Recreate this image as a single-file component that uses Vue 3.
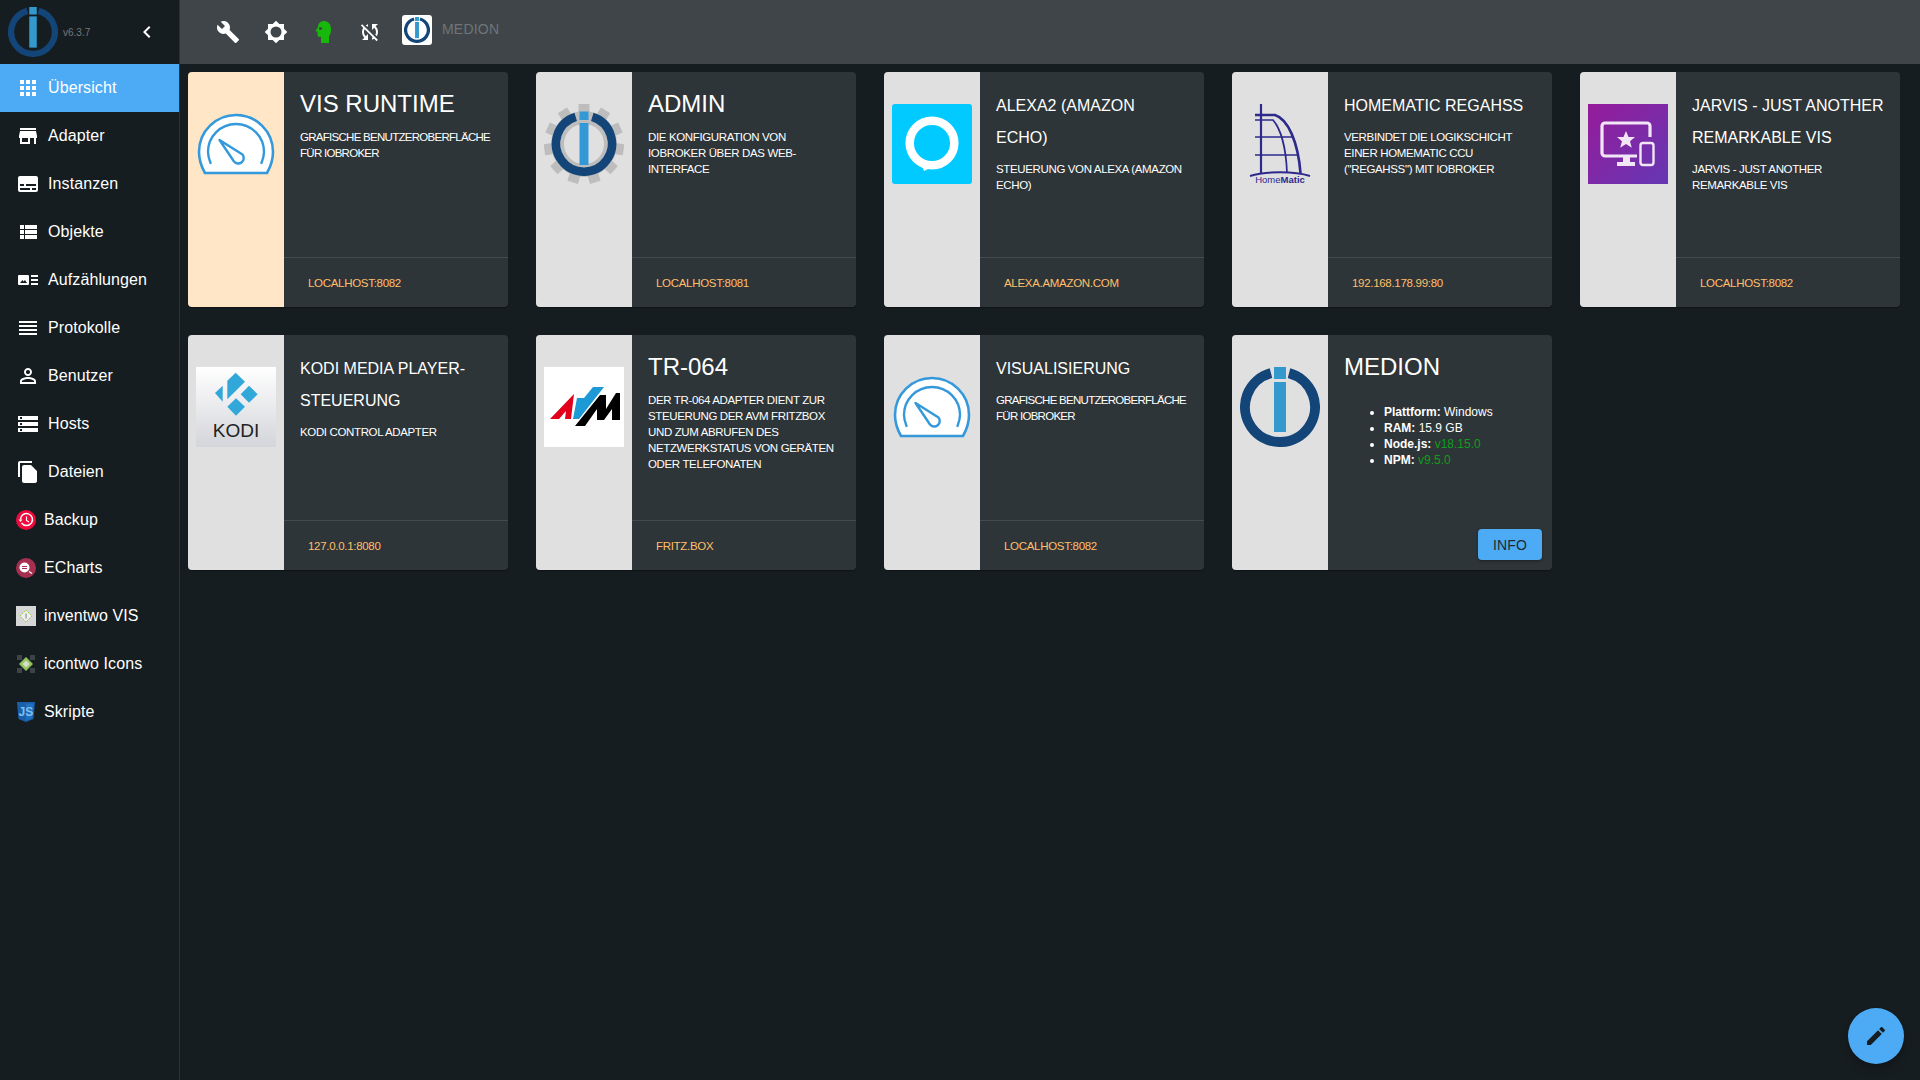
<template>
  <div class="app">
    <!-- shared logos -->
    <svg class="defs" aria-hidden="true">
      <symbol id="iob" viewBox="0 0 80 80">
        <path d="M49 6.2A35 35 0 1 1 31 6.2" fill="none" stroke="#144578" stroke-width="10" />
        <rect x="34" y="0" width="12" height="12" fill="#3399cc" />
        <rect x="34" y="15" width="12" height="50" fill="#3399cc" />
      </symbol>
      <symbol id="gauge" viewBox="0 0 80 80">
        <path d="M9 69C5 62 3 56 3 48 3 27 20 11 40 11s37 16 37 37c0 8-2 14-6 21Z" fill="#fff" stroke="#3399db" stroke-width="2.6" stroke-linejoin="round" />
        <path d="M14.5 59C13 55 12 52 12 48a28 28 0 0 1 56 0c0 4-1 7-2.5 11" fill="none" stroke="#3399db" stroke-width="2.4" stroke-linecap="round" />
        <path d="M23.5 36 46.5 50.5A5.5 5.5 0 0 1 38 57.5Z" fill="#fff" stroke="#3399db" stroke-width="2.4" stroke-linejoin="round" />
      </symbol>
    </svg>

    <aside class="sidebar">
      <div class="brand">
        <svg class="brand-logo"><use href="#iob" /></svg>
        <span class="version">v6.3.7</span>
        <svg class="collapse" viewBox="0 0 24 24"><path d="M15.41 7.41 14 6l-6 6 6 6 1.41-1.41L10.83 12z" /></svg>
      </div>
      <nav>
        <a v-for="item in menu" :key="item.label" class="menu-item" :class="{ active: item.active, adapter: item.adapter }">
          <svg v-if="item.icon" class="menu-icon" viewBox="0 0 24 24"><path :d="item.icon" /></svg>

          <svg v-else-if="item.adapter === 'backup'" class="adapter-icon" viewBox="0 0 20 20">
            <circle cx="10" cy="10" r="10" fill="#ee0a3c" />
            <path d="M5.6 13A6 6 0 1 0 4.500 9.500" fill="none" stroke="#fff" stroke-width="1.500" />
            <path d="M10.500 6.500V10.500L13 12" fill="none" stroke="#fff" stroke-width="1.200" />
            <path d="M2.500 9.500h4l-2 2.400Z" fill="#fff" />
          </svg>
          <svg v-else-if="item.adapter === 'echarts'" class="adapter-icon" viewBox="0 0 20 20">
            <circle cx="10" cy="10" r="10" fill="#a52f50" />
            <circle cx="8.500" cy="9.500" r="5" fill="#fff" />
            <path d="M6 8.500h5M6 10.500h5" stroke="#a52f50" stroke-width="1" />
            <path d="M13 13.500l3 2" stroke="#fff" stroke-width="1.200" />
          </svg>
          <svg v-else-if="item.adapter === 'inventwo'" class="adapter-icon" viewBox="0 0 20 20">
            <rect width="20" height="20" fill="#d6d6d6" />
            <path d="M10 4l6 6-6 6-6-6Z" fill="#eee" stroke="#94d04a" stroke-width="1" stroke-dasharray="2 .8" />
            <rect x="9.600" y="7.500" width=".9" height="5" fill="#777" />
          </svg>
          <svg v-else-if="item.adapter === 'icontwo'" class="adapter-icon" viewBox="0 0 20 20">
            <g fill="#3d4447">
              <rect x="1" y="1" width="5" height="5" />
              <rect x="14" y="1" width="5" height="5" />
              <rect x="1" y="14" width="5" height="5" />
              <rect x="14" y="14" width="5" height="5" />
            </g>
            <path d="M10 3l7 7-7 7-7-7Z" fill="#92c45c" />
            <path d="M10 6.500l3.500 3.500-3.500 3.500L6.500 10Z" fill="#d8dcd4" />
          </svg>
          <svg v-else class="adapter-icon" viewBox="0 0 20 20">
            <path d="M1 0h18L17.500 17l-7.500 3-7.500-3Z" fill="#1a5fa8" />
            <path d="M10 1.500h7.500L16 16l-6 2.500Z" fill="#1f70c1" />
            <text x="10" y="14" class="js-mark">JS</text>
          </svg>

          <span>{{ item.label }}</span>
        </a>
      </nav>
    </aside>

    <header class="toolbar">
      <button class="tool"><svg viewBox="0 0 24 24"><path d="M22.7 19l-9.100-9.100c.9-2.300.4-5-1.500-6.900-2-2-5-2.400-7.400-1.300L9 6 6 9 1.600 4.700C.4 7.100.9 10.100 2.900 12.100c1.900 1.900 4.600 2.400 6.900 1.500l9.100 9.100c.4.4 1 .4 1.400 0l2.300-2.300c.5-.4.5-1.100.1-1.400z" /></svg></button>
      <button class="tool"><svg viewBox="0 0 24 24"><path fill-rule="evenodd" d="M20 8.690V4h-4.690L12 .69 8.690 4H4v4.690L.69 12 4 15.310V20h4.690L12 23.310 15.310 20H20v-4.690L23.310 12 20 8.690zM12 17.500a5.500 5.500 0 1 1 0-11 5.500 5.500 0 0 1 0 11z" /></svg></button>
      <button class="tool head"><svg viewBox="0 0 24 24"><path d="M13 1C9.500 1 7 3.500 7 7L4.800 10.500c-.3.5 0 1 .6 1H6.500v3.500c0 1 .8 1.800 1.800 1.800H10V23h8v-6.500c1.300-1.800 2-4 2-7C20 4.500 17.500 1 13 1z" /><circle cx="9.500" cy="8.500" r="1.600" fill="#3f4549" /></svg></button>
      <button class="tool sync"><svg viewBox="0 0 24 24"><path d="M10 6.350V4.260c-.8.21-1.550.54-2.230.96l1.460 1.460c.25-.12.5-.24.77-.33zm-7.140-.94l2.360 2.360C4.450 8.990 4 10.440 4 12c0 2.210.91 4.200 2.360 5.640L4 20h6v-6l-2.240 2.240C6.680 15.150 6 13.660 6 12c0-1 .25-1.940.68-2.770l8.080 8.080c-.25.13-.5.25-.77.34v2.090c.8-.21 1.550-.54 2.230-.96l2.360 2.360 1.270-1.270L4.140 4.140 2.860 5.410zM20 4h-6v6l2.240-2.240C17.320 8.850 18 10.340 18 12c0 1-.25 1.940-.68 2.770l1.460 1.460C19.550 15.010 20 13.560 20 12c0-2.210-.91-4.200-2.360-5.640L20 4z" /></svg></button>
      <div class="host-tile"><svg><use href="#iob" /></svg></div>
      <span class="host-name">MEDION</span>
    </header>

    <main class="content">
      <section v-for="card in cards" :key="card.title" class="card">
        <div class="card-img" :class="{ peach: card.peach }">
          <svg v-if="card.logo === 'gauge'" class="logo"><use href="#gauge" /></svg>

          <svg v-else-if="card.logo === 'admin'" class="logo" viewBox="0 0 80 80">
            <rect v-for="a in teeth" :key="a" x="34.500" y="0" width="11" height="14" fill="#bdbdbd" :transform="`rotate(${a} 40 40)`" />
            <circle cx="40" cy="40" r="33" fill="#bdbdbd" />
            <path d="M48.300 12.900A28 28 0 1 1 31.700 12.900" fill="none" stroke="#144578" stroke-width="8.500" />
            <circle cx="40" cy="40" r="20" fill="#e0e0e0" />
            <rect x="35.500" y="7.500" width="9" height="8.500" fill="#3399d6" />
            <rect x="35.500" y="19" width="9" height="42" fill="#3399d6" />
          </svg>

          <svg v-else-if="card.logo === 'alexa'" class="logo" viewBox="0 0 80 80">
            <rect width="80" height="80" rx="3" fill="#00caff" />
            <circle cx="40" cy="39" r="22.300" fill="none" stroke="#fff" stroke-width="8.500" />
            <path d="M28 57 32 67 44 61Z" fill="#fff" />
          </svg>

          <svg v-else-if="card.logo === 'homematic'" class="logo" viewBox="0 0 80 80">
            <g fill="none" stroke="#2d2a8c">
              <path d="M21 0V69" stroke-width="2.200" />
              <path d="M15 11H35C48 15 58 38 60.500 69" stroke-width="2.600" />
              <path d="M15 16H33C40 24 46 42 47 69" stroke-width="1.700" />
              <path d="M15 33H52M15 51H59" stroke-width="1.300" />
              <path d="M10 72C25 67 55 67 70 72" stroke-width="2" />
            </g>
            <text x="40" y="79" class="hm-mark">Home<tspan font-weight="700">Matic</tspan></text>
          </svg>

          <svg v-else-if="card.logo === 'jarvis'" class="logo" viewBox="0 0 80 80">
            <defs>
              <linearGradient id="jarvis-bg" x1="0" y1="0" x2="1" y2="1">
                <stop offset="0" stop-color="#961b9a" />
                <stop offset="1" stop-color="#6538b4" />
              </linearGradient>
            </defs>
            <rect width="80" height="80" fill="url(#jarvis-bg)" />
            <g fill="none" stroke="#f2e6f6">
              <path d="M62 33V22a3 3 0 0 0-3-3H17a3 3 0 0 0-3 3V49a3 3 0 0 0 3 3H49" stroke-width="3.200" />
              <rect x="52.500" y="39" width="13" height="22" rx="2.500" stroke-width="2.400" />
            </g>
            <path d="M38 27l2.500 6h6.500l-5 4.200 1.800 6.600L38 40l-5.800 3.800 1.800-6.600-5-4.200h6.500Z" fill="#f2e6f6" />
            <path d="M35 53h7v5h5v4H29v-4h6Z" fill="#f2e6f6" />
          </svg>

          <svg v-else-if="card.logo === 'kodi'" class="logo" viewBox="0 0 80 80">
            <defs>
              <linearGradient id="kodi-bg" x1="0" y1="0" x2="0" y2="1">
                <stop offset="0" stop-color="#fff" />
                <stop offset="1" stop-color="#d4d5da" />
              </linearGradient>
            </defs>
            <rect width="80" height="80" fill="url(#kodi-bg)" />
            <g fill="#31a8d9">
              <path d="M19 26l7.700-7.300v16Z" />
              <path d="M39.700 5.700 49 14.700 31.300 32.300V13.700Z" />
              <path d="M53 18.700 61.700 27.300 53 35.700 44.700 27.300Z" />
              <path d="M40 31.300 49 39.700 40 48.700 31.300 39.700Z" />
            </g>
            <text x="40" y="70" class="kodi-mark">KODI</text>
          </svg>

          <svg v-else-if="card.logo === 'avm'" class="logo" viewBox="0 0 80 80">
            <rect width="80" height="80" fill="#fff" />
            <path d="M6 52 30 27 27 52H21L22 44 15 52Z" fill="#e2001a" />
            <path d="M49 20H60L35 52H29L33 31 40 31Z" fill="#1d9ad6" />
            <path d="M31 59 56 28H62V42L72 26H76V53H68V42L60 53H53V42L41 59Z" fill="#000" />
          </svg>

          <svg v-else class="logo"><use href="#iob" /></svg>
        </div>

        <div class="card-body">
          <div class="card-text">
            <div class="card-title" :class="{ small: card.small }">{{ card.title }}</div>
            <div v-if="card.desc" class="card-desc" :class="{ tight: card.tight }">{{ card.desc }}</div>
            <ul v-if="card.info" class="info-list">
              <li v-for="row in card.info" :key="row.name"><b>{{ row.name }}:</b> <span :class="{ ok: row.ok }">{{ row.value }}</span></li>
            </ul>
          </div>
          <div v-if="card.url" class="card-foot">{{ card.url }}</div>
          <div v-else class="card-actions"><button class="info-btn">INFO</button></div>
        </div>
      </section>
    </main>

    <button class="fab"><svg viewBox="0 0 24 24"><path d="M3 17.250V21h3.750L17.810 9.940l-3.750-3.750L3 17.250zM20.710 7.040c.39-.39.39-1.020 0-1.410l-2.340-2.340c-.39-.39-1.020-.39-1.410 0l-1.830 1.830 3.750 3.750 1.830-1.830z" /></svg></button>
  </div>
</template>

<script setup>
const teeth = Array.from({ length: 11 }, (_, i) => (i * 360) / 11)

const menu = [
  { label: 'Übersicht', active: true, icon: 'M4 8h4V4H4v4zm6 12h4v-4h-4v4zm-6 0h4v-4H4v4zm0-6h4v-4H4v4zm6 0h4v-4h-4v4zm6-10v4h4V4h-4zm-6 4h4V4h-4v4zm6 6h4v-4h-4v4zm0 6h4v-4h-4v4z' },
  { label: 'Adapter', icon: 'M20 4H4v2h16V4zm1 10v-2l-1-5H4l-1 5v2h1v6h10v-6h4v6h2v-6h1zm-9 4H6v-4h6v4z' },
  { label: 'Instanzen', icon: 'M20 4H4c-1.100 0-2 .9-2 2v12c0 1.100.9 2 2 2h16c1.100 0 2-.9 2-2V6c0-1.100-.9-2-2-2zM4 12h4v2H4v-2zm10 6H4v-2h10v2zm6 0h-4v-2h4v2zm0-4H10v-2h10v2z' },
  { label: 'Objekte', icon: 'M4 14h4v-4H4v4zm0 5h4v-4H4v4zM4 9h4V5H4v4zm5 5h12v-4H9v4zm0 5h12v-4H9v4zM9 5v4h12V5H9z' },
  { label: 'Aufzählungen', icon: 'M3 7h9a1 1 0 0 1 1 1v8a1 1 0 0 1-1 1H3a1 1 0 0 1-1-1V8a1 1 0 0 1 1-1zm1 8h7l-2-3-1.500 1.500L6.500 12zM15 7h7v2h-7zm0 4h7v2h-7zm0 4h7v2h-7z' },
  { label: 'Protokolle', icon: 'M3 15h18v-2H3v2zm0 4h18v-2H3v2zm0-8h18V9H3v2zm0-6v2h18V5H3z' },
  { label: 'Benutzer', icon: 'M12 5.900c1.160 0 2.100.94 2.100 2.100s-.94 2.100-2.100 2.100S9.900 9.160 9.900 8s.94-2.100 2.100-2.100m0 9c2.970 0 6.100 1.460 6.100 2.100v1.100H5.900V17c0-.64 3.130-2.100 6.100-2.100M12 4C9.790 4 8 5.790 8 8s1.790 4 4 4 4-1.790 4-4-1.790-4-4-4zm0 9c-2.670 0-8 1.340-8 4v3h16v-3c0-2.660-5.330-4-8-4z' },
  { label: 'Hosts', icon: 'M2 20h20v-4H2v4zm2-3h2v2H4v-2zM2 4v4h20V4H2zm4 3H4V5h2v2zm-4 7h20v-4H2v4zm2-3h2v2H4v-2z' },
  { label: 'Dateien', icon: 'M16 1H4c-1.100 0-2 .9-2 2v14h2V3h12V1zm-1 4l6 6v10c0 1.100-.9 2-2 2H7.990C6.890 23 6 22.100 6 21l.01-14c0-1.100.89-2 1.990-2h7z' },
  { label: 'Backup', adapter: 'backup' },
  { label: 'ECharts', adapter: 'echarts' },
  { label: 'inventwo VIS', adapter: 'inventwo' },
  { label: 'icontwo Icons', adapter: 'icontwo' },
  { label: 'Skripte', adapter: 'scripts' },
]

const cards = [
  { title: 'VIS RUNTIME', logo: 'gauge', peach: true, tight: true, desc: 'GRAFISCHE BENUTZEROBERFLÄCHE\nFÜR IOBROKER', url: 'LOCALHOST:8082' },
  { title: 'ADMIN', logo: 'admin', desc: 'DIE KONFIGURATION VON\nIOBROKER ÜBER DAS WEB-\nINTERFACE', url: 'LOCALHOST:8081' },
  { title: 'ALEXA2 (AMAZON\nECHO)', small: true, logo: 'alexa', desc: 'STEUERUNG VON ALEXA (AMAZON\nECHO)', url: 'ALEXA.AMAZON.COM' },
  { title: 'HOMEMATIC REGAHSS', small: true, logo: 'homematic', desc: 'VERBINDET DIE LOGIKSCHICHT\nEINER HOMEMATIC CCU\n("REGAHSS") MIT IOBROKER', url: '192.168.178.99:80' },
  { title: 'JARVIS - JUST ANOTHER\nREMARKABLE VIS', small: true, logo: 'jarvis', desc: 'JARVIS - JUST ANOTHER\nREMARKABLE VIS', url: 'LOCALHOST:8082' },
  { title: 'KODI MEDIA PLAYER-\nSTEUERUNG', small: true, logo: 'kodi', desc: 'KODI CONTROL ADAPTER', url: '127.0.0.1:8080' },
  { title: 'TR-064', logo: 'avm', desc: 'DER TR-064 ADAPTER DIENT ZUR\nSTEUERUNG DER AVM FRITZBOX\nUND ZUM ABRUFEN DES\nNETZWERKSTATUS VON GERÄTEN\nODER TELEFONATEN', url: 'FRITZ.BOX' },
  { title: 'VISUALISIERUNG', small: true, logo: 'gauge', tight: true, desc: 'GRAFISCHE BENUTZEROBERFLÄCHE\nFÜR IOBROKER', url: 'LOCALHOST:8082' },
  {
    title: 'MEDION',
    logo: 'iob',
    info: [
      { name: 'Plattform', value: 'Windows' },
      { name: 'RAM', value: '15.9 GB' },
      { name: 'Node.js', value: 'v18.15.0', ok: true },
      { name: 'NPM', value: 'v9.5.0', ok: true },
    ],
  },
]
</script>

<style>
html,
body {
  background: #161d21;
}
</style>

<style scoped>
.app {
  height: 1080px;
  overflow: hidden;
  display: grid;
  grid-template-columns: 180px 1fr;
  grid-template-rows: 64px 1fr;
  position: relative;
  background: #161d21;
  font-family: "Liberation Sans", Arial, sans-serif;
  color: #fff;
}

.defs {
  position: absolute;
  width: 0;
  height: 0;
}

.sidebar {
  grid-row: 1 / 3;
  border-right: 1px solid #2c3336;
}

.brand {
  height: 64px;
  display: flex;
  align-items: center;
  padding-left: 8px;
  box-sizing: border-box;
}

.brand-logo {
  width: 50px;
  height: 50px;
}

.version {
  margin-left: 5px;
  font-size: 10px;
  color: #777;
}

.collapse {
  width: 24px;
  height: 24px;
  margin-left: 45px;
  fill: #fff;
}

.menu-item {
  height: 48px;
  display: flex;
  align-items: center;
  gap: 8px;
  padding-left: 16px;
  font-size: 16px;
  letter-spacing: .1px;
}

.menu-item.active {
  background: #4dabf5;
}

.menu-icon {
  width: 24px;
  height: 24px;
  fill: #fff;
}

.adapter-icon {
  width: 20px;
  height: 20px;
}

.js-mark {
  font-size: 12px;
  font-weight: 700;
  fill: #7fc0f0;
  text-anchor: middle;
}

.toolbar {
  display: flex;
  align-items: center;
  padding-left: 24px;
  background: #3f4549;
}

.tool {
  width: 48px;
  height: 48px;
  padding: 12px;
  border: 0;
  background: none;
}

.tool.head,
.tool.sync {
  margin-left: -1px;
}

.tool svg {
  display: block;
  width: 24px;
  height: 24px;
  fill: #fff;
}

.tool.head svg {
  fill: #17b80b;
}

.host-tile {
  width: 30px;
  height: 30px;
  margin: -4px 0 0 8px;
  padding: 2px;
  box-sizing: border-box;
  background: #fff;
  border-radius: 3px;
}

.host-tile svg {
  display: block;
  width: 26px;
  height: 26px;
}

.host-name {
  margin: -6px 0 0 10px;
  font-size: 14px;
  letter-spacing: .2px;
  color: #6f7578;
}

.content {
  display: flex;
  flex-wrap: wrap;
  align-content: flex-start;
  gap: 28px;
  padding: 8px 0 0 8px;
}

.card {
  width: 320px;
  height: 235px;
  display: flex;
  background: #2e3538;
  border-radius: 4px;
  overflow: hidden;
  box-shadow: 0 2px 1px -1px rgba(0, 0, 0, .2), 0 1px 1px rgba(0, 0, 0, .14);
}

.card-img {
  width: 96px;
  flex: none;
  padding: 32px 8px 0;
  box-sizing: border-box;
  background: #e0e0e0;
}

.card-img.peach {
  background: #fee6c6;
}

.logo {
  display: block;
  width: 80px;
  height: 80px;
}

.hm-mark {
  font-family: "Liberation Sans", Arial, sans-serif;
  font-size: 9.500px;
  fill: #2d2a8c;
  text-anchor: middle;
}

.kodi-mark {
  font-family: "Liberation Sans", Arial, sans-serif;
  font-size: 19px;
  fill: #222;
  text-anchor: middle;
}

.card-body {
  flex: 1;
  min-width: 0;
  display: flex;
  flex-direction: column;
}

.card-text {
  flex: 1;
  padding: 16px 0 0 16px;
  white-space: pre;
}

.card-title {
  font-size: 24px;
  line-height: 32px;
  margin-bottom: 9px;
}

.card-title.small {
  padding-top: 2px;
  font-size: 16px;
  margin-bottom: 7px;
}

.card-desc {
  font-size: 11.500px;
  letter-spacing: -.36px;
  line-height: 16px;
}

.card-desc.tight {
  letter-spacing: -.72px;
}

.info-list {
  margin: 21px 0 0;
  padding-left: 40px;
  font-size: 12px;
  line-height: 16px;
}

.ok {
  color: #0f9d1c;
}

.card-foot {
  height: 50px;
  display: flex;
  align-items: center;
  padding: 1px 0 0 24px;
  box-sizing: border-box;
  border-top: 1px solid #444b4e;
  font-size: 11.500px;
  letter-spacing: -.3px;
  color: #ffbf6b;
}

.card-actions {
  display: flex;
  justify-content: flex-end;
  padding: 0 10px 10px 0;
}

.info-btn {
  width: 64px;
  height: 31px;
  padding: 0;
  border: 0;
  border-radius: 4px;
  background: #4dabf5;
  color: #1e2a33;
  font: 14px "Liberation Sans", Arial, sans-serif;
  letter-spacing: .2px;
  box-shadow: 0 1px 3px rgba(0, 0, 0, .4);
}

.fab {
  position: absolute;
  right: 16px;
  bottom: 16px;
  width: 56px;
  height: 56px;
  padding: 16px;
  border: 0;
  border-radius: 50%;
  background: #4dabf5;
  box-shadow: 0 3px 5px -1px rgba(0, 0, 0, .2), 0 6px 10px rgba(0, 0, 0, .14);
}

.fab svg {
  display: block;
  width: 24px;
  height: 24px;
  fill: #161d21;
}
</style>
